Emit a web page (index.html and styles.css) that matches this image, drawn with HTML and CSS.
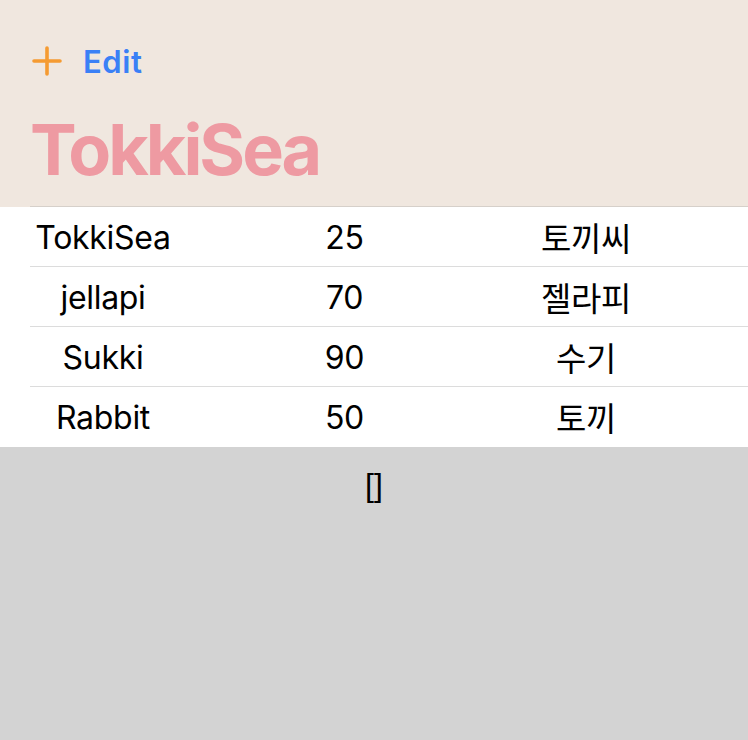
FILE: index.html
```html
<!DOCTYPE html>
<html>
<head>
<meta charset="utf-8">
<link rel="stylesheet" href="styles.css">
</head>
<body>
<div class="app">
  <header class="header">
    <div class="toolbar">
      <svg class="plus" width="30" height="30" viewBox="0 0 30 30"><path d="M15 2V28M2 15H28" stroke="#f59b32" stroke-width="3.6" stroke-linecap="round" fill="none"/></svg>
      <span class="edit">Edit</span>
    </div>
    <h1 class="title">TokkiSea</h1>
  </header>
  <section class="list">
    <div class="row"><span>TokkiSea</span><span>25</span><span class="ko">토끼씨</span></div>
    <div class="row"><span>jellapi</span><span>70</span><span class="ko">젤라피</span></div>
    <div class="row"><span>Sukki</span><span>90</span><span class="ko">수기</span></div>
    <div class="row"><span>Rabbit</span><span>50</span><span class="ko">토끼</span></div>
  </section>
  <footer class="empty">[]</footer>
</div>
</body>
</html>
```
FILE: styles.css
```css
html, body {
  margin: 0;
  padding: 0;
  height: 100%;
}
body {
  font-family: Inter, "Noto Sans CJK KR", sans-serif;
  background: #d3d3d3;
  color: #000;
}
.app {
  display: flex;
  flex-direction: column;
  height: 740px;
}
.header {
  background: #f0e7df;
  padding: 0 0 0 30px;
  height: 207px;
  box-sizing: border-box;
  position: relative;
}
.header::after {
  content: "";
  position: absolute;
  left: 30px;
  right: 0;
  bottom: 0;
  height: 1px;
  background: #d6d0ca;
}
.toolbar {
  display: flex;
  align-items: center;
  gap: 21px;
  height: 30px;
  padding-top: 46px;
  padding-left: 2px;
}
.plus {
  display: block;
}
.edit {
  color: #3a80f6;
  font-size: 31px;
  font-weight: 600;
  letter-spacing: 0.6px;
}
.title {
  margin: 0;
  margin-top: 32px;
  font-size: 70px;
  line-height: 84px;
  font-weight: 700;
  color: #ee9aa2;
  letter-spacing: -3px;
}
.list {
  background: #fff;
}
.row {
  display: grid;
  grid-template-columns: repeat(3, 200px);
  column-gap: 41.5px;
  padding-left: 3px;
  height: 60px;
  align-items: center;
  font-size: 32px;
  letter-spacing: -0.3px;
  position: relative;
}
.row span {
  text-align: center;
}
.row + .row::before {
  content: "";
  position: absolute;
  left: 30px;
  right: 0;
  top: -1px;
  height: 1px;
  background: #dcdcdc;
}
.ko {
  font-family: "Noto Sans CJK KR", sans-serif;
  font-size: 33px;
}
.empty {
  flex: 1;
  text-align: center;
  font-size: 32px;
  padding-top: 20px;
  font-family: "Liberation Sans", sans-serif;
}
```
